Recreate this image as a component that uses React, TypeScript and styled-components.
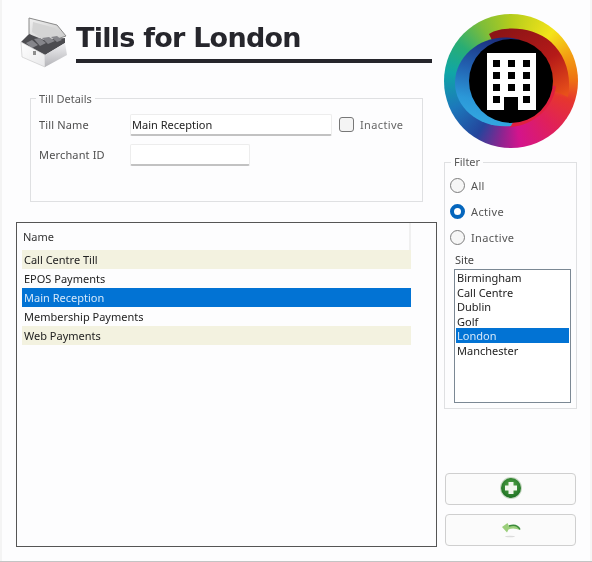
import React from "react";
import styled, { createGlobalStyle } from "styled-components";

const Global = createGlobalStyle`
  html, body { margin: 0; padding: 0; background: #fff; }
  * { box-sizing: border-box; }
`;

const Frame = styled.div`
  width: 592px;
  height: 562px;
  display: flex;
  gap: 7px;
  padding: 14px 15px 14px 16px;
  background: #fdfdfe;
  border-bottom: 1px solid #c4c4c4;
  box-shadow: inset 2px 0 0 #f4f4f4, inset -2px 0 0 #f6f6f6;
  font-family: "Noto Sans", "Liberation Sans", sans-serif;
  font-size: 11px;
  color: #222;
  filter: blur(0.25px);
`;

const LeftColumn = styled.div`
  width: 421px;
  display: flex;
  flex-direction: column;
  padding-top: 2px;
`;

const RightColumn = styled.div`
  width: 133px;
  display: flex;
  flex-direction: column;
`;

const Header = styled.header`
  display: flex;
  gap: 8px;
  padding-left: 4px;
  height: 76px;
`;

const TitleBlock = styled.div`
  width: 356px;
  height: 47px;
  border-bottom: 4px solid #26262c;
`;

const Title = styled.h1`
  margin: 0;
  font-family: "DejaVu Sans", sans-serif;
  font-size: 27px;
  line-height: 44px;
  font-weight: 700;
  color: #26262c;
  letter-spacing: -0.75px;
  white-space: nowrap;
`;

const Group = styled.fieldset`
  margin: 0;
  border: 1px solid #dfe0e2;
  min-width: 0;
`;

const DetailsGroup = styled(Group)`
  margin-left: 14px;
  width: 393px;
  height: 110px;
  padding: 8px 8px 0;
  display: flex;
  flex-direction: column;
  gap: 8px;
`;

const GroupTitle = styled.legend`
  padding: 0 3px;
  margin-left: -3px;
  line-height: 14px;
  color: #5a5a5a;
`;

const FormRow = styled.div`
  display: flex;
  align-items: center;
  height: 22px;
`;

const FieldLabel = styled.label`
  width: 91px;
  color: #4f4f4f;
  letter-spacing: 0.15px;
`;

const TextInput = styled.input<{ $w: number }>`
  width: ${(p) => p.$w}px;
  height: 22px;
  padding: 0 1px;
  border: 1px solid #ededed;
  border-bottom: 2px solid #c2c2c2;
  border-radius: 2px;
  background: #fff;
  font: inherit;
  color: #222;
  outline: none;
`;

const CheckBox = styled.span`
  width: 15px;
  height: 15px;
  margin-left: 7px;
  border: 1.5px solid #777;
  border-radius: 3px;
  background: #f4f4f4;
`;

const CheckLabel = styled.span`
  margin-left: 6px;
  color: #666;
  letter-spacing: 0.35px;
`;

const ListFrame = styled.div`
  margin-top: 20px;
  height: 326px;
  border: 1px solid #555;
  padding: 0 5px;
`;

const ListHeader = styled.div`
  width: 389px;
  height: 27px;
  padding-left: 1px;
  display: flex;
  align-items: center;
  border-right: 2px solid #f0f0f0;
  color: #333;
`;

const Row = styled.div<{ $tone?: "plain" | "alt" | "selected" }>`
  width: 389px;
  height: 19px;
  padding-left: 2px;
  line-height: 19px;
  background: ${(p) =>
    p.$tone === "alt" ? "#f3f2e0" : p.$tone === "selected" ? "#0273d4" : "transparent"};
  color: ${(p) => (p.$tone === "selected" ? "#d5e8fa" : "#222")};
`;

const Logo = styled.div`
  width: 134px;
  height: 134px;
  border-radius: 50%;
  background: conic-gradient(
    #b4cc1c 0deg,
    #f4e41a 40deg,
    #f39a12 68deg,
    #ee7412 88deg,
    #e6362e 108deg,
    #e0205a 138deg,
    #d3148c 172deg,
    #8a2590 190deg,
    #24459c 212deg,
    #1c78bb 245deg,
    #10a6a6 278deg,
    #28ad74 305deg,
    #7dbd3a 332deg,
    #b4cc1c 360deg
  );
`;

const FilterGroup = styled(Group)`
  margin-top: 7px;
  height: 254px;
  padding: 3px 5px 0 9px;
  display: flex;
  flex-direction: column;
`;

const RadioRow = styled.div`
  height: 26px;
  margin-left: -4px;
  display: flex;
  align-items: center;
  gap: 6px;
  color: #555;
  letter-spacing: 0.35px;
`;

const Radio = styled.span<{ $on?: boolean }>`
  width: 15px;
  height: 15px;
  border-radius: 50%;
  background: ${(p) => (p.$on ? "#fff" : "#f6f6f6")};
  border: ${(p) => (p.$on ? "4px solid #0566bd" : "1.5px solid #7d7d7d")};
`;

const SiteLabel = styled.div`
  margin: 2px 0 1px 1px;
  line-height: 16px;
  color: #444;
`;

const SiteList = styled.div`
  width: 117px;
  height: 134px;
  border: 1px solid #7b8894;
  padding: 0 1px;
  background: #fff;
`;

const SiteRow = styled.div<{ $on?: boolean }>`
  height: 14.5px;
  padding-left: 1px;
  line-height: 16.5px;
  background: ${(p) => (p.$on ? "#0273d4" : "transparent")};
  color: ${(p) => (p.$on ? "#d5e8fa" : "#222")};
`;

const Actions = styled.div`
  margin: auto 0 1px 1px;
  display: flex;
  flex-direction: column;
  gap: 9px;
`;

const ActionButton = styled.button`
  width: 131px;
  height: 32px;
  padding: 0;
  display: flex;
  align-items: center;
  justify-content: center;
  background: #fbfbfb;
  border: 1px solid #cfcfcf;
  border-radius: 4px;
`;

const TillBoxIcon = () => (
  <svg width="48" height="54" viewBox="0 0 48 54" style={{ flex: "none" }}>
    <defs>
      <linearGradient id="lid" x1="0" y1="0" x2="1" y2="1">
        <stop offset="0" stopColor="#f0f0f0" />
        <stop offset="1" stopColor="#c6c6c6" />
      </linearGradient>
      <linearGradient id="faceL" x1="0" y1="0" x2="1" y2="1">
        <stop offset="0" stopColor="#ffffff" />
        <stop offset="1" stopColor="#e8e8ea" />
      </linearGradient>
      <linearGradient id="faceR" x1="0" y1="0" x2="0" y2="1">
        <stop offset="0" stopColor="#f0f0f2" />
        <stop offset="1" stopColor="#b4b4b8" />
      </linearGradient>
    </defs>
    <path d="M9 2 L37 9 L46 20 L23 28 L9 18 Z" fill="url(#lid)" stroke="#8a8a8a" strokeWidth="1" />
    <path d="M13 6 L35 12 L41 19 L24 24 L12 16 Z" fill="#d4d4d4" />
    <path d="M1 26 L9 18 L24 24 L45 22 L45 27 L25 39 Z" fill="#4c4c50" />
    <path d="M6 27 L12 24 L18 29 L12 32 Z M14 23 L20 22 L26 27 L20 30 Z M22 22 L29 21 L35 25 L28 28 Z M31 21 L37 20 L42 24 L37 26 Z" fill="#85858a" />
    <path d="M1 26 L25 39 L25 51 L2 41 Z" fill="url(#faceL)" stroke="#c4c4c4" strokeWidth="0.6" />
    <path d="M25 39 L45 27 L47 39 L25 51 Z" fill="url(#faceR)" />
    <path d="M13 35 h3 v4 h-3 Z" fill="#8f8f8f" />
  </svg>
);

const LogoArt = () => (
  <svg width="134" height="134" viewBox="0 0 134 134" style={{ display: "block" }}>
    <defs>
      <linearGradient id="swirlRed" x1="0.2" y1="0" x2="0.9" y2="1">
        <stop offset="0" stopColor="#8c1416" />
        <stop offset="0.55" stopColor="#b51a18" />
        <stop offset="1" stopColor="#e8501a" />
      </linearGradient>
      <linearGradient id="swirlBlue" x1="0.65" y1="0" x2="0.45" y2="1">
        <stop offset="0" stopColor="#1b2a78" />
        <stop offset="0.4" stopColor="#2260b0" />
        <stop offset="0.75" stopColor="#2b98d8" />
        <stop offset="1" stopColor="#33a8e0" />
      </linearGradient>
    </defs>
    <path d="M45 20 C60 11 90 13 107 28 C121 41 128 60 124 83 L108 76 L67 67 Z" fill="url(#swirlRed)" />
    <path d="M112 72 C110 92 90 112 66 113 L67 67 Z" fill="#e0203f" />
    <path d="M76 26 C45 16 11 38 11 69 C11 95 37 115 67 112 L90 67 Z" fill="url(#swirlBlue)" />
    <circle cx="67" cy="67" r="42" fill="#000" />
    <path
      transform="translate(43 39)"
      fill="#fff"
      fillRule="evenodd"
      d="M0 0H49V57H31V44H17V57H0Z M6 7V14H13V7Z M21 7V14H28V7Z M36 7V14H43V7Z M6 19V26H13V19Z M21 19V26H28V19Z M36 19V26H43V19Z M6 31V38H13V31Z M21 31V38H28V31Z M36 31V38H43V31Z M6 43V50H13V43Z M36 43V50H43V43Z"
    />
  </svg>
);

const AddIcon = () => (
  <svg width="24" height="24" viewBox="0 0 24 24">
    <defs>
      <radialGradient id="addBg" cx="0.5" cy="0.4" r="0.6">
        <stop offset="0" stopColor="#5aa84a" />
        <stop offset="1" stopColor="#1c7022" />
      </radialGradient>
    </defs>
    <circle cx="12" cy="11" r="11" fill="#c8d8c4" />
    <circle cx="12" cy="11" r="10" fill="url(#addBg)" />
    <path d="M9.5 5h5v3.5H18v5h-3.5V17h-5v-3.5H6v-5h3.5Z" fill="#f2f6ee" />
  </svg>
);

const BackIcon = () => (
  <svg width="20" height="18" viewBox="0 0 20 18">
    <ellipse cx="9" cy="15.5" rx="5" ry="0.8" fill="#dcdcdc" />
    <path d="M19 9 C17 4.5 13 3.5 8 5 L6.5 2 L1 6 L6 11.5 L7.5 8.5 C11 7 15 7.5 19 9 Z" fill="#9ccf7c" />
    <path d="M19 8.5 C17 4.5 13 3.5 8 5" fill="none" stroke="#3b8a3c" strokeWidth="1.4" />
  </svg>
);

const tills: { name: string; tone: "plain" | "alt" | "selected" }[] = [
  { name: "Call Centre Till", tone: "alt" },
  { name: "EPOS Payments", tone: "plain" },
  { name: "Main Reception", tone: "selected" },
  { name: "Membership Payments", tone: "plain" },
  { name: "Web Payments", tone: "alt" },
];

const sites = ["Birmingham", "Call Centre", "Dublin", "Golf", "London", "Manchester"];

export default function App() {
  return (
    <>
      <Global />
      <Frame>
        <LeftColumn>
          <Header>
            <TillBoxIcon />
            <TitleBlock>
              <Title>Tills for London</Title>
            </TitleBlock>
          </Header>
          <DetailsGroup as="fieldset">
            <GroupTitle>Till Details</GroupTitle>
            <FormRow>
              <FieldLabel>Till Name</FieldLabel>
              <TextInput $w={202} defaultValue="Main Reception" />
              <CheckBox />
              <CheckLabel>Inactive</CheckLabel>
            </FormRow>
            <FormRow>
              <FieldLabel>Merchant ID</FieldLabel>
              <TextInput $w={120} />
            </FormRow>
          </DetailsGroup>
          <ListFrame>
            <ListHeader>Name</ListHeader>
            {tills.map((t) => (
              <Row key={t.name} $tone={t.tone}>
                {t.name}
              </Row>
            ))}
          </ListFrame>
        </LeftColumn>
        <RightColumn>
          <Logo>
            <LogoArt />
          </Logo>
          <FilterGroup as="fieldset">
            <GroupTitle>Filter</GroupTitle>
            <RadioRow>
              <Radio />
              All
            </RadioRow>
            <RadioRow>
              <Radio $on />
              Active
            </RadioRow>
            <RadioRow>
              <Radio />
              Inactive
            </RadioRow>
            <SiteLabel>Site</SiteLabel>
            <SiteList>
              {sites.map((s) => (
                <SiteRow key={s} $on={s === "London"}>
                  {s}
                </SiteRow>
              ))}
            </SiteList>
          </FilterGroup>
          <Actions>
            <ActionButton>
              <AddIcon />
            </ActionButton>
            <ActionButton>
              <BackIcon />
            </ActionButton>
          </Actions>
        </RightColumn>
      </Frame>
    </>
  );
}
